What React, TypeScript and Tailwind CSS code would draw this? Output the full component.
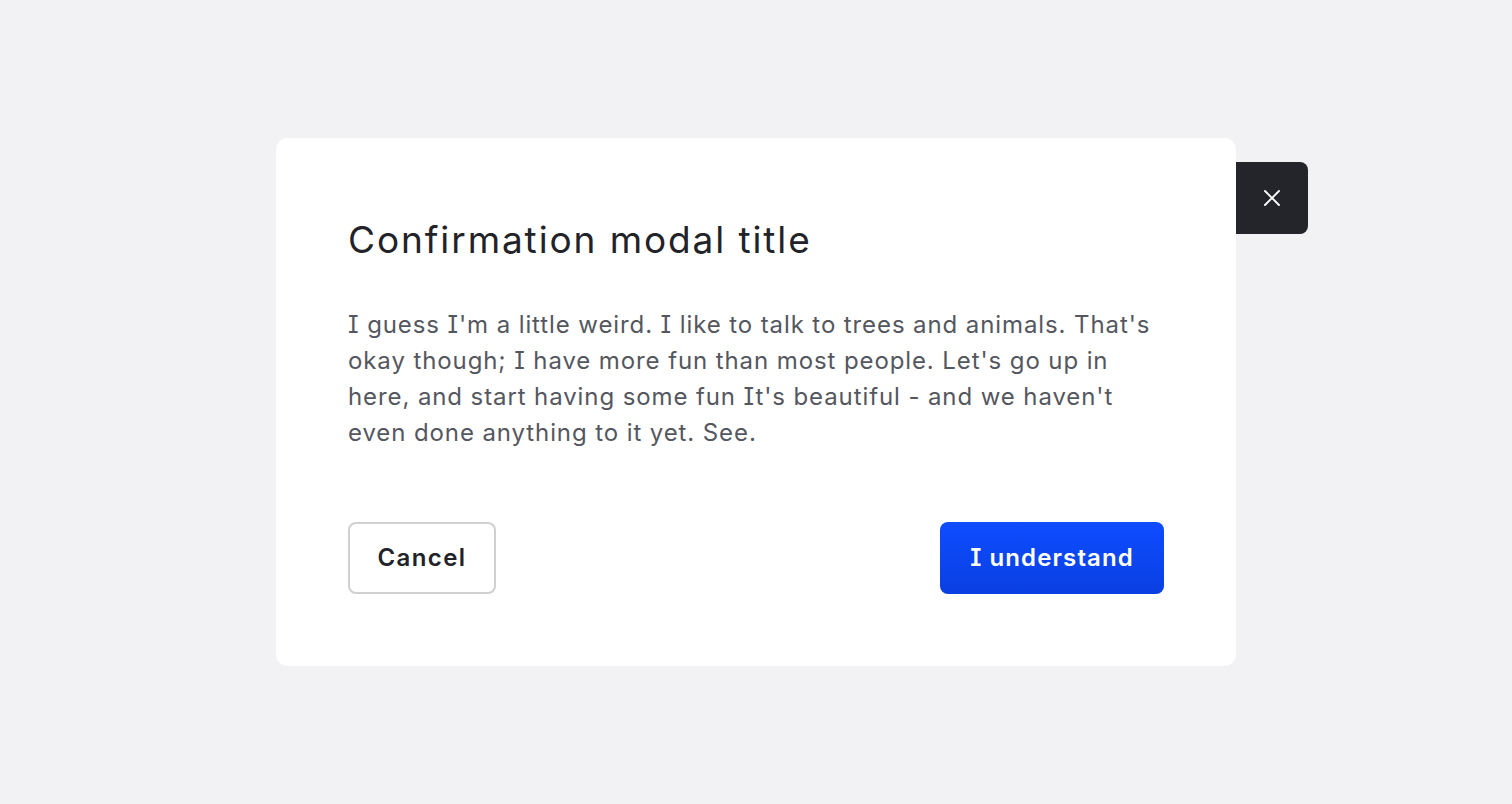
import { X } from 'lucide-react';

const bodyText =
  "I guess I'm a little weird. I like to talk to trees and animals. That's okay though; I have more fun than most people. Let's go up in here, and start having some fun It's beautiful - and we haven't even done anything to it yet. See.";

export default function App() {
  return (
    <div className="flex h-[804px] w-full items-center justify-center bg-[#f2f2f4] font-['Inter',sans-serif] [font-feature-settings:'cv08']">
      <div className="relative w-[960px] rounded-xl bg-white p-[72px]">
        {/* Close tab */}
        <button
          aria-label="Close"
          className="absolute left-full top-6 flex h-[72px] w-[72px] items-center justify-center rounded-r-lg bg-[#23252b] text-white"
        >
          <X className="h-7 w-7" strokeWidth={1.6} />
        </button>

        <h2 className="text-[37px] font-normal leading-[60px] tracking-[1.9px] text-[#222328]">
          Confirmation modal title
        </h2>
        <p className="mt-[37px] text-[24px] leading-[36px] tracking-[0.9px] text-[#55575f]">{bodyText}</p>

        <div className="mt-[71px] flex items-center justify-between">
          <button className="flex h-[72px] w-[148px] items-center justify-center rounded-lg border-2 border-[#d0d0d2] bg-white text-[24px] font-semibold tracking-[1.4px] text-[#222328]">
            Cancel
          </button>
          <button className="flex h-[72px] w-[224px] items-center justify-center rounded-lg bg-gradient-to-b from-[#0e4cff] to-[#0a40e2] text-[24px] font-semibold tracking-[1.1px] text-white">
            I understand
          </button>
        </div>
      </div>
    </div>
  );
}
